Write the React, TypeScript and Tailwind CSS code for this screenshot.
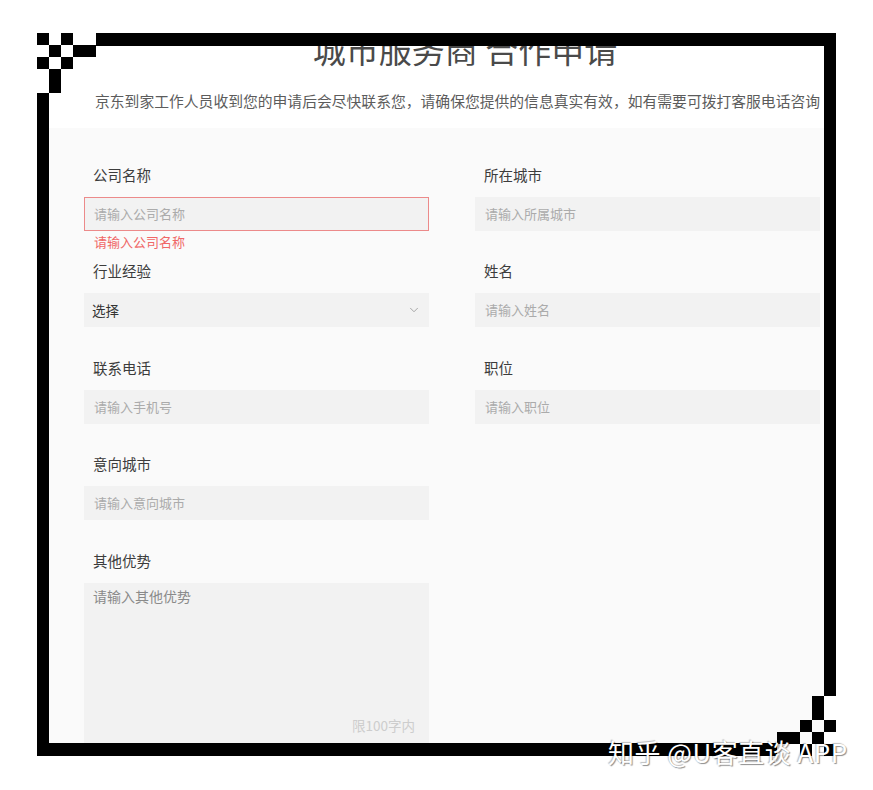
import { ChevronDown } from 'lucide-react';

// Form field definitions, in reading order (left column first on each row)
const rows: { label: string; placeholder: string; kind?: 'select' | 'error' }[][] = [
  [
    { label: '公司名称', placeholder: '请输入公司名称', kind: 'error' },
    { label: '所在城市', placeholder: '请输入所属城市' },
  ],
  [
    { label: '行业经验', placeholder: '选择', kind: 'select' },
    { label: '姓名', placeholder: '请输入姓名' },
  ],
  [
    { label: '联系电话', placeholder: '请输入手机号' },
    { label: '职位', placeholder: '请输入职位' },
  ],
  [{ label: '意向城市', placeholder: '请输入意向城市' }],
];

const font = { fontFamily: '"Noto Sans CJK SC", "Noto Sans", sans-serif' };

function Field({ label, placeholder, kind }: { label: string; placeholder: string; kind?: 'select' | 'error' }) {
  return (
    <div className="flex flex-col">
      <div className="h-5 pl-[9px] text-[14.5px] leading-5 text-[#3c3c3c]">{label}</div>
      {kind === 'select' ? (
        <div className="mt-3 flex h-[34px] items-center justify-between bg-[#f2f2f2] pl-[8px] pr-[8px]">
          <span className="text-[13.5px] text-[#333]">{placeholder}</span>
          <ChevronDown size={14} strokeWidth={1.5} className="text-[#9a9a9a]" />
        </div>
      ) : (
        <div
          className={
            kind === 'error'
              ? 'mt-3 flex h-[34px] items-center border border-[#ec8a8a] bg-[#f2f2f2] pl-[9px]'
              : 'mt-3 flex h-[34px] items-center bg-[#f2f2f2] pl-[10px]'
          }
        >
          <span className="text-[13px] text-[#ababab]">{placeholder}</span>
        </div>
      )}
      {kind === 'error' && <div className="pl-[10px] pt-[2px] text-[13px] leading-[18px] text-[#f06767]">{placeholder}</div>}
    </div>
  );
}

function Frame() {
  // pixel-art frame with checkered corners, drawn over the page
  const rects = [
    // top-left corner
    [37, 33, 12, 12], [61, 33, 12, 12], [49, 45, 12, 12], [73, 45, 23, 12],
    [37, 57, 12, 12], [61, 57, 12, 12], [49, 69, 12, 24],
    // borders
    [96, 33, 740, 13], [37, 93, 12, 663], [824, 33, 12, 663], [37, 743, 740, 13],
    // bottom-right corner
    [824, 744, 12, 12], [800, 744, 12, 12], [812, 732, 12, 12], [777, 732, 23, 12],
    [824, 720, 12, 12], [800, 720, 12, 12], [812, 696, 12, 24],
  ];
  return (
    <svg className="pointer-events-none absolute left-0 top-0" width={873} height={790}>
      {rects.map(([x, y, w, h], i) => (
        <rect key={i} x={x} y={y} width={w} height={h} fill="#000" />
      ))}
    </svg>
  );
}

export default function App() {
  return (
    <div className="relative h-[790px] w-[873px] overflow-hidden bg-white" style={font}>
      <div className="ml-[49px] mt-[46px] h-[697px] w-[775px] overflow-hidden">
        <div className="w-[832px]">
          {/* Header: the page is scrolled so the title is partly under the frame */}
          <div className="flex h-[82px] flex-col bg-white">
            <h1 className="-mt-[13px] text-center text-[33px] font-normal leading-8 text-[#4a4a4a]">
              城市服务商 合作申请
            </h1>
            <p className="mt-[26px] whitespace-nowrap pl-[46px] text-[14.8px] leading-5 text-[#5c5c5c]">
              京东到家工作人员收到您的申请后会尽快联系您，请确保您提供的信息真实有效，如有需要可拨打客服电话咨询
            </p>
          </div>

          {/* Form */}
          <div className="bg-[#fafafa] px-[35px] pt-[37px] pb-8">
            {rows.map((row, i) => (
              <div key={i} className={i === 0 ? 'grid h-[96px] grid-cols-[345px_345px] gap-x-[46px]' : 'grid h-[96.5px] grid-cols-[345px_345px] gap-x-[46px]'}>
                {row.map((f) => (
                  <Field key={f.label} {...f} />
                ))}
              </div>
            ))}

            <div className="flex w-[345px] flex-col">
              <div className="h-5 pl-[9px] text-[14.5px] leading-5 text-[#3c3c3c]">其他优势</div>
              <div className="relative mt-3 h-[170px] bg-[#f2f2f2] pl-[9px] pt-0">
                <span className="text-[14px] leading-5 text-[#8a8a8a]">请输入其他优势</span>
                <span className="absolute right-[14px] top-[132px] text-[13.5px] text-[#cdcdcd]">限100字内</span>
              </div>
            </div>
          </div>
        </div>
      </div>

      <Frame />

      {/* watermark */}
      <div
        className="absolute left-[608px] top-[736px] whitespace-nowrap text-[26px] leading-8 tracking-[0.5px] text-white"
        style={{ textShadow: '1px 1px 1px rgba(0,0,0,0.45), -1px -1px 1px rgba(0,0,0,0.25)' }}
      >
        知乎 @U客直谈 APP
      </div>
    </div>
  );
}
